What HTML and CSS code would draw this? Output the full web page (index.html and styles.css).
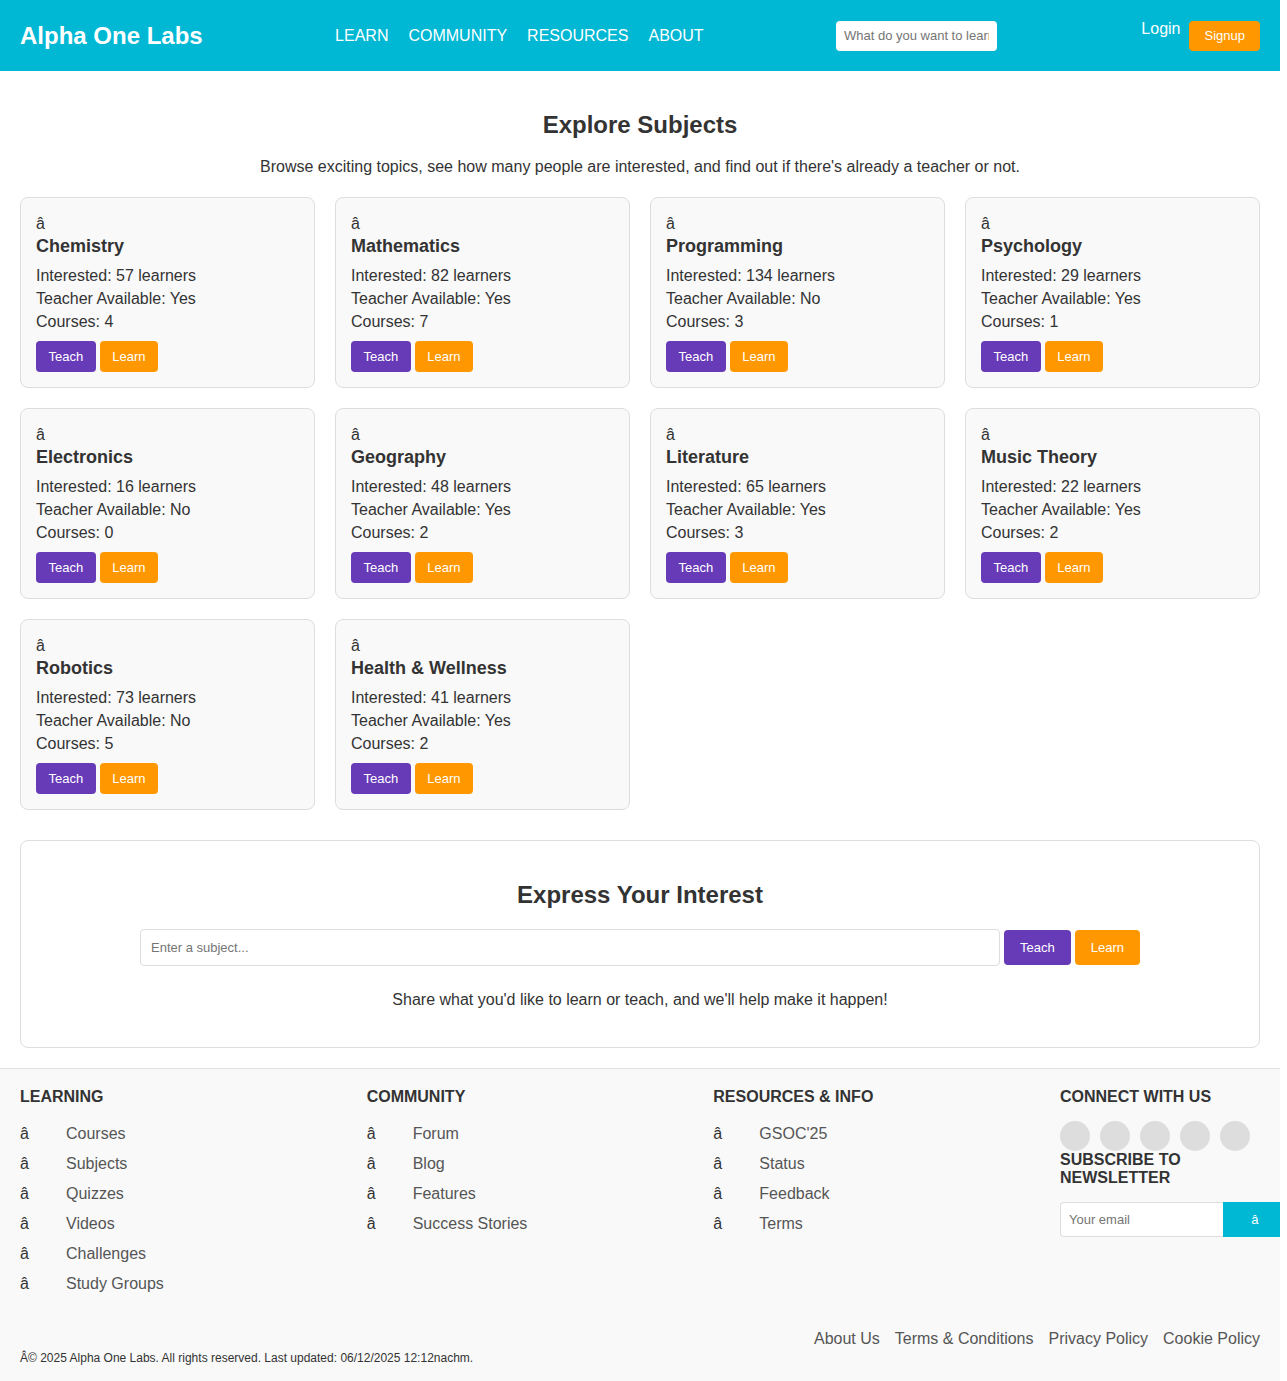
FILE: index.html
```html
<!DOCTYPE html>
<html lang="en">
<head>
<meta charset="utf-8">
<title>Alpha One Labs</title>
<link rel="stylesheet" href="styles.css">
</head>
<body>
<header class="topbar">
  <div class="logo">Alpha One Labs</div>
  <nav class="nav">
    <a href="#">LEARN</a>
    <a href="#">COMMUNITY</a>
    <a href="#">RESOURCES</a>
    <a href="#">ABOUT</a>
  </nav>
  <input class="search" type="text" placeholder="What do you want to learn?">
  <div class="auth">
    <a class="login" href="#">Login</a>
    <a class="signup" href="#">Signup</a>
  </div>
</header>

<main class="main">
  <h2 class="page-title">Explore Subjects</h2>
  <p class="page-sub">Browse exciting topics, see how many people are interested, and find out if there's already a teacher or not.</p>

  <div class="grid">
    <div class="card"><div class="card-icon">â</div><h3>Chemistry</h3><p>Interested: 57 learners</p><p>Teacher Available: Yes</p><p>Courses: 4</p><div class="card-btns"><a class="btn teach" href="#">Teach</a><a class="btn learn" href="#">Learn</a></div></div>
    <div class="card"><div class="card-icon">â</div><h3>Mathematics</h3><p>Interested: 82 learners</p><p>Teacher Available: Yes</p><p>Courses: 7</p><div class="card-btns"><a class="btn teach" href="#">Teach</a><a class="btn learn" href="#">Learn</a></div></div>
    <div class="card"><div class="card-icon">â</div><h3>Programming</h3><p>Interested: 134 learners</p><p>Teacher Available: No</p><p>Courses: 3</p><div class="card-btns"><a class="btn teach" href="#">Teach</a><a class="btn learn" href="#">Learn</a></div></div>
    <div class="card"><div class="card-icon">â</div><h3>Psychology</h3><p>Interested: 29 learners</p><p>Teacher Available: Yes</p><p>Courses: 1</p><div class="card-btns"><a class="btn teach" href="#">Teach</a><a class="btn learn" href="#">Learn</a></div></div>
    <div class="card"><div class="card-icon">â</div><h3>Electronics</h3><p>Interested: 16 learners</p><p>Teacher Available: No</p><p>Courses: 0</p><div class="card-btns"><a class="btn teach" href="#">Teach</a><a class="btn learn" href="#">Learn</a></div></div>
    <div class="card"><div class="card-icon">â</div><h3>Geography</h3><p>Interested: 48 learners</p><p>Teacher Available: Yes</p><p>Courses: 2</p><div class="card-btns"><a class="btn teach" href="#">Teach</a><a class="btn learn" href="#">Learn</a></div></div>
    <div class="card"><div class="card-icon">â</div><h3>Literature</h3><p>Interested: 65 learners</p><p>Teacher Available: Yes</p><p>Courses: 3</p><div class="card-btns"><a class="btn teach" href="#">Teach</a><a class="btn learn" href="#">Learn</a></div></div>
    <div class="card"><div class="card-icon">â</div><h3>Music Theory</h3><p>Interested: 22 learners</p><p>Teacher Available: Yes</p><p>Courses: 2</p><div class="card-btns"><a class="btn teach" href="#">Teach</a><a class="btn learn" href="#">Learn</a></div></div>
    <div class="card"><div class="card-icon">â</div><h3>Robotics</h3><p>Interested: 73 learners</p><p>Teacher Available: No</p><p>Courses: 5</p><div class="card-btns"><a class="btn teach" href="#">Teach</a><a class="btn learn" href="#">Learn</a></div></div>
    <div class="card"><div class="card-icon">â</div><h3>Health &amp; Wellness</h3><p>Interested: 41 learners</p><p>Teacher Available: Yes</p><p>Courses: 2</p><div class="card-btns"><a class="btn teach" href="#">Teach</a><a class="btn learn" href="#">Learn</a></div></div>
  </div>

  <section class="interest">
    <h2 class="interest-title">Express Your Interest</h2>
    <div class="interest-form">
      <input class="interest-input" type="text" placeholder="Enter a subject...">
      <a class="btn-lg teach" href="#">Teach</a>
      <a class="btn-lg learn" href="#">Learn</a>
    </div>
    <p class="interest-note">Share what you'd like to learn or teach, and we'll help make it happen!</p>
  </section>
</main>

<footer class="footer">
  <div class="footer-cols">
    <div class="fcol">
      <h4>LEARNING</h4>
      <ul>
        <li><span class="ficon">â</span><a href="#">Courses</a></li>
        <li><span class="ficon">â</span><a href="#">Subjects</a></li>
        <li><span class="ficon">â</span><a href="#">Quizzes</a></li>
        <li><span class="ficon">â</span><a href="#">Videos</a></li>
        <li><span class="ficon">â</span><a href="#">Challenges</a></li>
        <li><span class="ficon">â</span><a href="#">Study Groups</a></li>
      </ul>
    </div>
    <div class="fcol">
      <h4>COMMUNITY</h4>
      <ul>
        <li><span class="ficon">â</span><a href="#">Forum</a></li>
        <li><span class="ficon">â</span><a href="#">Blog</a></li>
        <li><span class="ficon">â</span><a href="#">Features</a></li>
        <li><span class="ficon">â</span><a href="#">Success Stories</a></li>
      </ul>
    </div>
    <div class="fcol">
      <h4>RESOURCES &amp; INFO</h4>
      <ul>
        <li><span class="ficon">â</span><a href="#">GSOC'25</a></li>
        <li><span class="ficon">â</span><a href="#">Status</a></li>
        <li><span class="ficon">â</span><a href="#">Feedback</a></li>
        <li><span class="ficon">â</span><a href="#">Terms</a></li>
      </ul>
    </div>
    <div class="fcol">
      <h4 class="connect">CONNECT WITH US</h4>
      <div class="social">
        <span class="dot"></span><span class="dot"></span><span class="dot"></span><span class="dot"></span><span class="dot"></span>
      </div>
      <h4 class="subscribe">SUBSCRIBE TO NEWSLETTER</h4>
      <div class="news-form">
        <input class="news-input" type="text" placeholder="Your email">
        <a class="news-btn" href="#">â</a>
      </div>
    </div>
  </div>
  <div class="footer-bottom">
    <div class="legal">
      <a href="#">About Us</a>
      <a href="#">Terms &amp; Conditions</a>
      <a href="#">Privacy Policy</a>
      <a href="#">Cookie Policy</a>
    </div>
    <p class="copy">Â© 2025 Alpha One Labs. All rights reserved. Last updated: 06/12/2025 12:12nachm.</p>
  </div>
</footer>
</body>
</html>
```
FILE: styles.css
```css
* { box-sizing: border-box; }

html { background: #ffffff; }

body {
  margin: 0;
  width: 1280px;
  font-family: "Liberation Sans", Arial, sans-serif;
  color: #333333;
  background: #ffffff;
}

a { text-decoration: none; color: inherit; }

/* Header */
.topbar {
  height: 71px;
  background: #00b8d4;
  padding: 0 20px;
  display: flex;
  align-items: center;
  justify-content: space-between;
}

.logo {
  color: #ffffff;
  font-size: 24px;
  font-weight: bold;
  line-height: 28px;
}

.nav {
  display: flex;
  gap: 20px;
}

.nav a {
  color: #ffffff;
  font-size: 16px;
  line-height: 18px;
}

.search {
  width: 161px;
  height: 30px;
  border: none;
  border-radius: 4px;
  padding: 0 8px;
  font-family: "Liberation Sans", Arial, sans-serif;
  font-size: 13px;
  color: #333;
  background: #ffffff;
}

.search::placeholder { color: #757575; }

.auth {
  display: flex;
  align-items: flex-start;
  gap: 9px;
  padding-left: 12px;
}

.login {
  color: #ffffff;
  font-size: 16px;
  line-height: 16px;
}

.signup {
  display: block;
  background: #ff9800;
  color: #ffffff;
  font-size: 13px;
  line-height: 14px;
  padding: 8px 15px;
  border-radius: 4px;
}

/* Main */
.main {
  padding: 40px 20px 0;
}

.page-title {
  margin: 0 0 19px;
  text-align: center;
  font-size: 24px;
  line-height: 28px;
  color: #333;
}

.page-sub {
  margin: 0 0 21px;
  text-align: center;
  font-size: 16px;
  line-height: 18px;
}

.grid {
  display: grid;
  grid-template-columns: repeat(4, 1fr);
  gap: 20px;
}

.card {
  background: #f9f9f9;
  border: 1px solid #dddddd;
  border-radius: 8px;
  padding: 15px;
}

.card-icon {
  font-size: 16px;
  line-height: 22px;
}

.card h3 {
  margin: 0 0 7px;
  font-size: 18px;
  line-height: 22px;
  color: #333;
}

.card p {
  margin: 0;
  font-size: 16px;
  line-height: 23px;
}

.card-btns {
  display: flex;
  gap: 4px;
  margin-top: 8px;
}

.btn {
  display: block;
  color: #ffffff;
  font-size: 13px;
  line-height: 15px;
  padding: 8px 12.5px;
  border-radius: 4px;
}

.teach { background: #673ab7; color: #fff; }
.learn { background: #ff9800; color: #fff; }

/* Interest */
.interest {
  margin-top: 30px;
  border: 1px solid #dddddd;
  border-radius: 8px;
  padding: 40px 20px 38px;
  text-align: center;
}

.interest-title {
  margin: 0 0 20px;
  font-size: 24px;
  line-height: 28px;
  color: #333;
}

.interest-form {
  width: 1000px;
  margin: 0 auto 25px;
  display: flex;
  align-items: center;
  gap: 4px;
}

.interest-input {
  flex: 1;
  height: 37px;
  border: 1px solid #dddddd;
  border-radius: 4px;
  padding: 0 10px;
  font-family: "Liberation Sans", Arial, sans-serif;
  font-size: 13px;
}

.interest-input::placeholder { color: #757575; }

.btn-lg {
  display: block;
  font-size: 13px;
  line-height: 15px;
  padding: 10px 16px;
  border-radius: 4px;
}

.interest-note {
  margin: 0;
  font-size: 16px;
  line-height: 18px;
}

/* Footer */
.footer {
  margin-top: 20px;
  background: #f9f9f9;
  border-top: 1px solid #e0e0e0;
  padding: 19px 20px 17px;
}

.footer-cols {
  display: flex;
  justify-content: space-between;
}

.fcol {
  width: 200px;
}

.fcol h4 {
  margin: 0 0 19px;
  font-size: 16px;
  line-height: 18px;
  color: #333;
}

.fcol ul {
  list-style: none;
  margin: 0;
  padding: 0;
}

.fcol li {
  font-size: 16px;
  line-height: 18px;
  margin-bottom: 12px;
  white-space: nowrap;
}

.ficon {
  display: inline-block;
  width: 46px;
  color: #333;
}

.fcol li a { color: #555555; }

.fcol h4.connect { margin-bottom: 15px; }

.social {
  display: flex;
  gap: 10px;
}

.dot {
  width: 30px;
  height: 30px;
  border-radius: 50%;
  background: #dddddd;
}

.fcol h4.subscribe {
  margin: 0 0 15px;
}

.news-form {
  display: flex;
  width: 227px;
}

.news-input {
  flex: 0 0 163px;
  width: 163px;
  height: 35px;
  border: 1px solid #dddddd;
  border-right: none;
  border-radius: 4px 0 0 4px;
  padding: 0 8px;
  font-family: "Liberation Sans", Arial, sans-serif;
  font-size: 13px;
  background: #ffffff;
}

.news-input::placeholder { color: #757575; }

.news-btn {
  flex: 0 0 64px;
  height: 35px;
  background: #00b8d4;
  color: #ffffff;
  font-size: 13px;
  line-height: 35px;
  text-align: center;
  border-radius: 0 4px 4px 0;
}

.footer-bottom {
  margin-top: 25px;
}

.legal {
  display: flex;
  justify-content: flex-end;
  gap: 15px;
}

.legal a {
  color: #555555;
  font-size: 16px;
  line-height: 18px;
}

.copy {
  margin: 3px 0 0;
  font-size: 12px;
  line-height: 14px;
  color: #333;
}
```
